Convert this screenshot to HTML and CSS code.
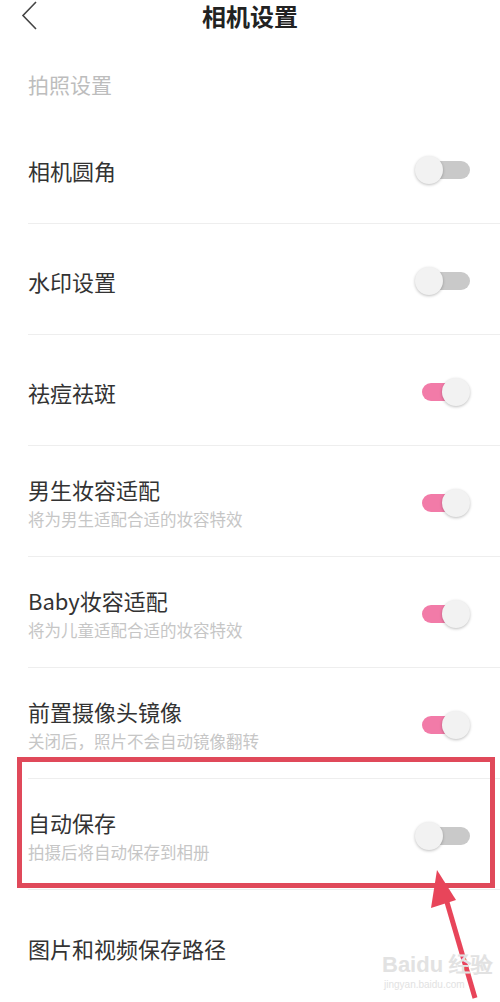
FILE: index.html
```html
<!DOCTYPE html>
<html>
  <head>
    <meta charset="utf-8">
    <title>相机设置</title>
    <link rel="stylesheet" href="styles.css">
  </head>
  <body>
    <header class="topbar">
      <svg class="back" width="18" height="30" viewBox="0 0 18 30">
        <path d="M15 2 L2 15.5 L15 29" fill="none" stroke="#444" stroke-width="1.6"/>
      </svg>
      <h1>相机设置</h1>
    </header>

    <div class="section">拍照设置</div>

    <div class="row">
      <div class="text"><div class="title">相机圆角</div></div>
      <div class="toggle"><span class="track"></span><span class="knob"></span></div>
    </div>
    <div class="row">
      <div class="text"><div class="title">水印设置</div></div>
      <div class="toggle"><span class="track"></span><span class="knob"></span></div>
    </div>
    <div class="row">
      <div class="text"><div class="title">祛痘祛斑</div></div>
      <div class="toggle on"><span class="track"></span><span class="knob"></span></div>
    </div>
    <div class="row">
      <div class="text">
        <div class="title">男生妆容适配</div>
        <div class="sub">将为男生适配合适的妆容特效</div>
      </div>
      <div class="toggle on"><span class="track"></span><span class="knob"></span></div>
    </div>
    <div class="row">
      <div class="text">
        <div class="title">Baby妆容适配</div>
        <div class="sub">将为儿童适配合适的妆容特效</div>
      </div>
      <div class="toggle on"><span class="track"></span><span class="knob"></span></div>
    </div>
    <div class="row">
      <div class="text">
        <div class="title">前置摄像头镜像</div>
        <div class="sub">关闭后，照片不会自动镜像翻转</div>
      </div>
      <div class="toggle on"><span class="track"></span><span class="knob"></span></div>
    </div>
    <div class="row">
      <div class="text">
        <div class="title">自动保存</div>
        <div class="sub">拍摄后将自动保存到相册</div>
      </div>
      <div class="toggle"><span class="track"></span><span class="knob"></span></div>
    </div>
    <div class="row last">
      <div class="text"><div class="title">图片和视频保存路径</div></div>
    </div>

    <!-- annotation drawn over the screenshot -->
    <div class="mark"></div>
    <svg class="arrow" width="60" height="130" viewBox="0 0 60 130">
      <line x1="45" y1="128" x2="14" y2="22" stroke="#e8455a" stroke-width="5"/>
      <polygon points="7,0 1,38 26,30" fill="#e8455a"/>
    </svg>
    <div class="watermark">
      <div class="wm-logo">Bai<span>du</span> 经验</div>
      <div class="wm-url">jingyan.baidu.com</div>
    </div>
  </body>
</html>
```

FILE: styles.css
```css
html,
body {
  margin: 0;
  background: #fff;
}
body {
  position: relative;
  width: 500px;
  height: 1002px;
  overflow: hidden;
  font-family: "Noto Sans CJK SC", "Noto Sans", sans-serif;
  color: #333;
}
.topbar {
  position: relative;
  height: 31px;
  padding-top: 1px;
  box-sizing: border-box;
  display: flex;
  align-items: center;
  justify-content: center;
}
.topbar h1 {
  margin: 0;
  font-size: 24px;
  line-height: 30px;
  font-weight: bold;
  color: #222;
}
.back {
  position: absolute;
  left: 21px;
  top: 0;
}
.section {
  padding: 41px 0 17px 28px;
  font-size: 21px;
  line-height: 24px;
  color: #bdbdbd;
}
.row {
  display: flex;
  align-items: center;
  justify-content: space-between;
  height: 111px;
  box-sizing: border-box;
  padding: 4px 30px 0 0;
  margin-left: 28px;
  border-bottom: 1px solid #eeeeee;
}
.row.last {
  border-bottom: none;
}
.title {
  font-size: 22px;
  line-height: 26px;
  color: #333;
}
.sub {
  margin-top: 6px;
  font-size: 16.5px;
  line-height: 22px;
  color: #c6c6c6;
}
.toggle {
  position: relative;
  width: 55px;
  height: 28px;
}
.track {
  position: absolute;
  top: 5px;
  left: 13px;
  width: 42px;
  height: 18px;
  border-radius: 9px;
  background: #c9c9c9;
}
.knob {
  position: absolute;
  top: 0;
  left: 0;
  width: 28px;
  height: 28px;
  border-radius: 50%;
  background: #f2f2f2;
  box-shadow: 0 1px 3px rgba(0, 0, 0, 0.25);
}
.toggle.on .track {
  left: 7px;
  width: 38px;
  background: #f27ba8;
}
.toggle.on .knob {
  left: 27px;
}
.mark {
  position: absolute;
  left: 17px;
  top: 757px;
  width: 478px;
  height: 131px;
  box-sizing: border-box;
  border: 5px solid #e0495a;
}
.arrow {
  position: absolute;
  left: 430px;
  top: 870px;
}
.watermark {
  position: absolute;
  left: 382px;
  top: 952px;
  color: #e2e2e2;
  font-family: "Liberation Sans", sans-serif;
}
.wm-logo {
  font-size: 22px;
  font-weight: bold;
  line-height: 26px;
}
.wm-url {
  font-size: 10px;
  line-height: 14px;
  padding-left: 2px;
}
```
